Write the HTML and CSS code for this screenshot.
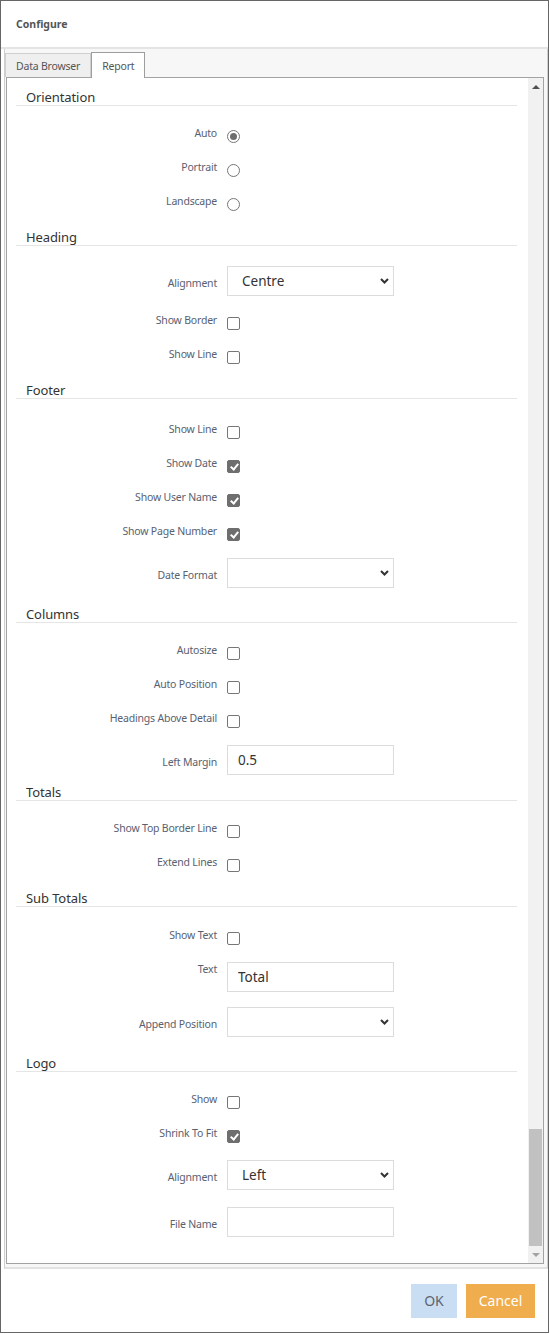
FILE: index.html
```html
<!DOCTYPE html>
<html lang="en">
<head>
    <meta charset="UTF-8">
    <meta name="viewport" content="width=device-width, initial-scale=1.0">
    <title>Configure</title>
    <link rel="stylesheet" href="styles.css">
</head>
<body>
    <div class="dialog">
        <div class="dialog-header">Configure</div>

        <div class="tabset">
            <div class="tab-strip">
                <div class="tab">Data Browser</div>
                <div class="tab active">Report</div>
            </div>

            <div class="panel">
                <div class="panel-body">

                    <!-- Orientation -->
                    <h3 class="section-title first">Orientation</h3>
                    <div class="section">
                        <label class="row"><span class="row-label">Auto</span><input type="radio" name="orientation" checked></label>
                        <label class="row"><span class="row-label">Portrait</span><input type="radio" name="orientation"></label>
                        <label class="row"><span class="row-label">Landscape</span><input type="radio" name="orientation"></label>
                    </div>

                    <!-- Heading -->
                    <h3 class="section-title">Heading</h3>
                    <div class="section">
                        <div class="row-field">
                            <span class="row-label">Alignment</span>
                            <span class="select">
                                <select><option>Centre</option><option>Left</option><option>Right</option></select>
                                <svg class="chevron" width="9" height="6" viewBox="0 0 9 6"><path d="M1 1l3.5 3.5L8 1" fill="none" stroke="#333" stroke-width="2"/></svg>
                            </span>
                        </div>
                        <label class="row"><span class="row-label">Show Border</span><input type="checkbox"></label>
                        <label class="row"><span class="row-label">Show Line</span><input type="checkbox"></label>
                    </div>

                    <!-- Footer -->
                    <h3 class="section-title">Footer</h3>
                    <div class="section footer-section">
                        <label class="row"><span class="row-label">Show Line</span><input type="checkbox"></label>
                        <label class="row"><span class="row-label">Show Date</span><input type="checkbox" checked></label>
                        <label class="row"><span class="row-label">Show User Name</span><input type="checkbox" checked></label>
                        <label class="row"><span class="row-label">Show Page Number</span><input type="checkbox" checked></label>
                        <div class="row-field">
                            <span class="row-label">Date Format</span>
                            <span class="select">
                                <select><option></option></select>
                                <svg class="chevron" width="9" height="6" viewBox="0 0 9 6"><path d="M1 1l3.5 3.5L8 1" fill="none" stroke="#333" stroke-width="2"/></svg>
                            </span>
                        </div>
                    </div>

                    <!-- Columns -->
                    <h3 class="section-title">Columns</h3>
                    <div class="section">
                        <label class="row"><span class="row-label">Autosize</span><input type="checkbox"></label>
                        <label class="row"><span class="row-label">Auto Position</span><input type="checkbox"></label>
                        <label class="row"><span class="row-label">Headings Above Detail</span><input type="checkbox"></label>
                        <div class="row-field short">
                            <span class="row-label">Left Margin</span>
                            <input class="text-input" type="text" value="0.5">
                        </div>
                    </div>

                    <!-- Totals -->
                    <h3 class="section-title">Totals</h3>
                    <div class="section">
                        <label class="row"><span class="row-label">Show Top Border Line</span><input type="checkbox"></label>
                        <label class="row"><span class="row-label">Extend Lines</span><input type="checkbox"></label>
                    </div>

                    <!-- Sub Totals -->
                    <h3 class="section-title">Sub Totals</h3>
                    <div class="section subtotal-section">
                        <label class="row"><span class="row-label">Show Text</span><input type="checkbox"></label>
                        <div class="row-field text-row">
                            <span class="row-label">Text</span>
                            <input class="text-input" type="text" value="Total">
                        </div>
                        <div class="row-field">
                            <span class="row-label">Append Position</span>
                            <span class="select">
                                <select><option></option></select>
                                <svg class="chevron" width="9" height="6" viewBox="0 0 9 6"><path d="M1 1l3.5 3.5L8 1" fill="none" stroke="#333" stroke-width="2"/></svg>
                            </span>
                        </div>
                    </div>

                    <!-- Logo -->
                    <h3 class="section-title">Logo</h3>
                    <div class="section">
                        <label class="row"><span class="row-label">Show</span><input type="checkbox"></label>
                        <label class="row"><span class="row-label">Shrink To Fit</span><input type="checkbox" checked></label>
                        <div class="row-field">
                            <span class="row-label">Alignment</span>
                            <span class="select">
                                <select><option>Left</option><option>Centre</option><option>Right</option></select>
                                <svg class="chevron" width="9" height="6" viewBox="0 0 9 6"><path d="M1 1l3.5 3.5L8 1" fill="none" stroke="#333" stroke-width="2"/></svg>
                            </span>
                        </div>
                        <div class="row-field">
                            <span class="row-label">File Name</span>
                            <input class="text-input" type="text" value="">
                        </div>
                    </div>
                </div>

                <div class="scrollbar">
                    <div class="scroll-btn"><span class="arrow-up"></span></div>
                    <div class="scroll-track"><div class="scroll-thumb"></div></div>
                    <div class="scroll-btn"><span class="arrow-down"></span></div>
                </div>
            </div>
        </div>

        <div class="dialog-buttons">
            <button class="btn btn-ok">OK</button>
            <button class="btn btn-cancel">Cancel</button>
        </div>
    </div>
</body>
</html>
```

FILE: styles.css
```css
body {
    margin: 0;
    font-family: "Noto Sans", "Open Sans", sans-serif;
    background: #fff;
}

.dialog {
    box-sizing: border-box;
    width: 549px;
    height: 1333px;
    border: 1px solid #666;
    background: #fff;
    display: flex;
    flex-direction: column;
}

.dialog-header {
    height: 46px;
    padding-left: 15px;
    display: flex;
    align-items: center;
    font-size: 10.5px;
    font-weight: bold;
    color: #555;
    border-bottom: 2px solid #e4e4e4;
}

/* tabs + panel */
.tabset {
    margin-left: 3px;
    border-left: 1px solid #cfcfcf;
    border-right: 1px solid #cfcfcf;
    border-bottom: 2px solid #e2e2e2;
    background: #f7f7f7;
    padding: 0 3px 3px 0;
}

.tab-strip {
    display: flex;
    align-items: flex-end;
    padding-top: 4px;
    height: 24px;
}

.tab {
    box-sizing: border-box;
    height: 24px;
    padding: 0 10px;
    display: flex;
    align-items: center;
    font-size: 10.5px;
    letter-spacing: -0.2px;
    color: #555;
    background: #efefef;
    border: 1px solid #cfcfcf;
    border-bottom: none;
}

.tab.active {
    height: 26px;
    margin-bottom: -1px;
    padding: 0 10px;
    background: #fff;
    border-color: #9d9d9d;
    position: relative;
    z-index: 1;
}

.panel {
    box-sizing: border-box;
    margin-left: 1px;
    height: 1187px;
    border: 1px solid #a3a3a3;
    background: #fff;
    display: flex;
    overflow: hidden;
}

.panel-body {
    flex: 1;
    padding: 3px 11px 0 9px;
    overflow: hidden;
}

.section-title {
    margin: 0;
    padding: 8px 0 0 10px;
    height: 16px;
    line-height: 16px;
    font-size: 13px;
    letter-spacing: -0.1px;
    font-weight: normal;
    color: #333;
    border-bottom: 1px solid #e5e5e5;
}

.section {
    padding-top: 13px;
}

.footer-section {
    padding-top: 16px;
}

.subtotal-section {
    padding-top: 14px;
}

.row {
    display: flex;
    align-items: center;
    gap: 10px;
    height: 34px;
}

.row-label {
    width: 201px;
    text-align: right;
    font-size: 10.5px;
    letter-spacing: -0.2px;
    line-height: 15px;
    color: #596170;
}

.row .row-label {
    padding-bottom: 5px;
}

.row-field {
    display: flex;
    align-items: flex-start;
    gap: 10px;
    height: 40px;
    padding-top: 7px;
}

.row-field .row-label {
    margin-top: 10px;
}

.row-field.short {
    height: 31px;
}

.row-field.text-row {
    height: 38px;
}

.row-field.text-row .row-label {
    margin-top: 0;
}

/* radios and checkboxes */
input[type="radio"],
input[type="checkbox"] {
    appearance: none;
    -webkit-appearance: none;
    box-sizing: border-box;
    width: 13px;
    height: 13px;
    margin: 0;
    border: 1px solid #767676;
    background: #fff;
    position: relative;
}

input[type="radio"] {
    border-radius: 50%;
}

input[type="radio"]:checked::after {
    content: "";
    position: absolute;
    left: 2px;
    top: 2px;
    width: 7px;
    height: 7px;
    border-radius: 50%;
    background: #6d6d6d;
}

input[type="checkbox"] {
    border-radius: 2px;
}

input[type="checkbox"]:checked {
    background: #6e6e6e;
    border-color: #6e6e6e;
}

input[type="checkbox"]:checked::after {
    content: "";
    position: absolute;
    left: 3.5px;
    top: 1px;
    width: 3px;
    height: 6px;
    border: solid #fff;
    border-width: 0 2px 2px 0;
    transform: rotate(40deg);
}

/* selects and text boxes */
.select {
    position: relative;
    display: block;
}

.select select,
.text-input {
    box-sizing: border-box;
    width: 167px;
    height: 30px;
    margin: 0;
    border: 1px solid #dcdcdc;
    border-radius: 0;
    background: #fff;
    font-family: inherit;
    font-size: 13.5px;
    color: #333;
    outline: none;
}

.select select {
    appearance: none;
    -webkit-appearance: none;
    padding: 0 0 0 14px;
}

.text-input {
    padding: 0 0 0 10px;
}

.chevron {
    position: absolute;
    right: 5px;
    top: 12px;
    pointer-events: none;
}

/* fake scrollbar */
.scrollbar {
    width: 15px;
    background: #f1f1f1;
    display: flex;
    flex-direction: column;
}

.scroll-btn {
    height: 17px;
    display: flex;
    align-items: center;
    justify-content: center;
}

.scroll-track {
    flex: 1;
    display: flex;
    flex-direction: column;
    justify-content: flex-end;
}

.scroll-thumb {
    height: 117px;
    margin: 0 1px;
    background: #c1c1c1;
}

.arrow-up,
.arrow-down {
    width: 0;
    height: 0;
    border-left: 4px solid transparent;
    border-right: 4px solid transparent;
}

.arrow-up {
    border-bottom: 4px solid #505050;
}

.arrow-down {
    border-top: 4px solid #a3a3a3;
}

/* footer buttons */
.dialog-buttons {
    flex: 1;
    display: flex;
    justify-content: flex-end;
    align-items: center;
    gap: 9px;
    padding-right: 13px;
}

.btn {
    height: 34px;
    border: none;
    font-family: inherit;
    font-size: 14px;
    padding: 0;
}

.btn-ok {
    width: 46px;
    background: #c9ddf3;
    color: #5d6570;
}

.btn-cancel {
    width: 69px;
    background: #efad4d;
    color: #fff;
}
```
